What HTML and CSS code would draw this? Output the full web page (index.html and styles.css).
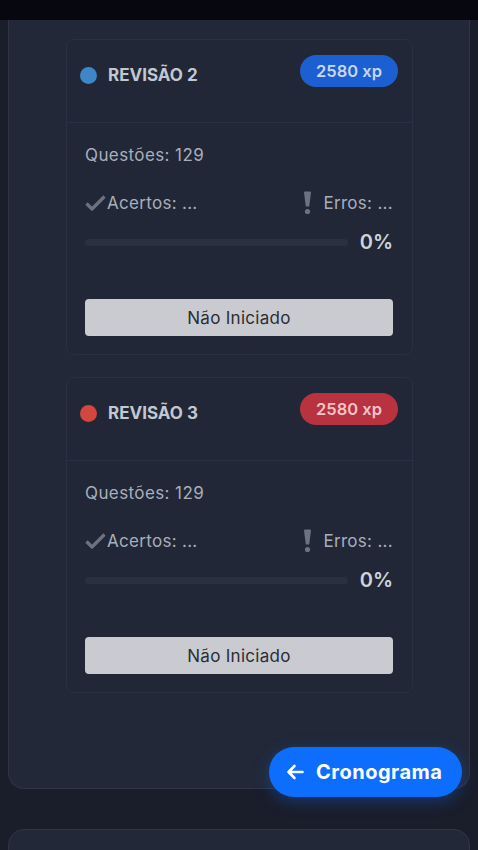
FILE: index.html
```html
<!DOCTYPE html>
<html lang="pt-BR">

<head>
    <meta charset="UTF-8">
    <meta name="viewport" content="width=device-width, initial-scale=1.0">
    <title>Revisões</title>
    <link rel="stylesheet" href="styles.css">
</head>

<body>
    <div class="topbar"></div>

    <div class="panel">
        <div class="review-card">
            <div class="review-header">
                <div class="review-title">
                    <span class="dot dot-blue"></span>
                    <span>REVISÃO 2</span>
                </div>
                <span class="xp xp-blue">2580 xp</span>
            </div>
            <div class="review-body">
                <div class="questions">Questões: 129</div>
                <div class="stats">
                    <div class="stat">
                        <svg class="icon-check" width="21" height="16" viewBox="0 0 21 16">
                            <path d="M1.5 8.5 L7 14 L19.5 1.5" fill="none" stroke="#6c7282" stroke-width="3.2" stroke-linejoin="round"/>
                        </svg>
                        <span>Acertos: ...</span>
                    </div>
                    <div class="stat">
                        <svg class="icon-alert" width="9" height="24" viewBox="0 0 9 24">
                            <path d="M1 1.5 Q1 0.5 2 0.5 H7 Q8 0.5 8 1.5 L6.2 15.5 H2.8 Z" fill="#6c7282"/>
                            <circle cx="4.5" cy="20.5" r="2.6" fill="#6c7282"/>
                        </svg>
                        <span>Erros: ...</span>
                    </div>
                </div>
                <div class="progress-row">
                    <div class="progress"><div class="progress-fill" style="width: 0%"></div></div>
                    <span class="percent">0%</span>
                </div>
                <button class="status-button">Não Iniciado</button>
            </div>
        </div>

        <div class="review-card">
            <div class="review-header">
                <div class="review-title">
                    <span class="dot dot-red"></span>
                    <span>REVISÃO 3</span>
                </div>
                <span class="xp xp-red">2580 xp</span>
            </div>
            <div class="review-body">
                <div class="questions">Questões: 129</div>
                <div class="stats">
                    <div class="stat">
                        <svg class="icon-check" width="21" height="16" viewBox="0 0 21 16">
                            <path d="M1.5 8.5 L7 14 L19.5 1.5" fill="none" stroke="#6c7282" stroke-width="3.2" stroke-linejoin="round"/>
                        </svg>
                        <span>Acertos: ...</span>
                    </div>
                    <div class="stat">
                        <svg class="icon-alert" width="9" height="24" viewBox="0 0 9 24">
                            <path d="M1 1.5 Q1 0.5 2 0.5 H7 Q8 0.5 8 1.5 L6.2 15.5 H2.8 Z" fill="#6c7282"/>
                            <circle cx="4.5" cy="20.5" r="2.6" fill="#6c7282"/>
                        </svg>
                        <span>Erros: ...</span>
                    </div>
                </div>
                <div class="progress-row">
                    <div class="progress"><div class="progress-fill" style="width: 0%"></div></div>
                    <span class="percent">0%</span>
                </div>
                <button class="status-button">Não Iniciado</button>
            </div>
        </div>
    </div>

    <div class="panel panel-next"></div>

    <button class="back-button">
        <svg width="18" height="16" viewBox="0 0 18 16">
            <path d="M16.5 8 H2.5 M8.5 2 L2.5 8 L8.5 14" fill="none" stroke="#fff" stroke-width="2.6" stroke-linecap="round" stroke-linejoin="round"/>
        </svg>
        <span>Cronograma</span>
    </button>
</body>

</html>
```

FILE: styles.css
```css
body {
    font-family: Inter, 'Noto Sans', sans-serif;
    margin: 0;
    padding: 0;
    background-color: #1a1d2a;
    color: #a9aebb;
    height: 850px;
    overflow: hidden;
    position: relative;
}

.topbar {
    height: 20px;
    background-color: #06070f;
}

.panel {
    margin: 0 8px;
    padding: 19px 56px 95px 57px;
    background-color: #222837;
    border: 1px solid #2f3546;
    border-top: none;
    border-radius: 0 0 16px 16px;
}

.panel-next {
    margin-top: 40px;
    height: 60px;
    padding: 0;
    border-top: 1px solid #2f3546;
    border-radius: 16px 16px 0 0;
}

.review-card {
    height: 316px;
    box-sizing: border-box;
    margin-bottom: 22px;
    background-color: #212736;
    border: 1px solid #293042;
    border-radius: 8px;
}

.review-card:last-child {
    margin-bottom: 0;
}

.review-header {
    height: 83px;
    box-sizing: border-box;
    padding: 15px 14px 0 13px;
    display: flex;
    justify-content: space-between;
    align-items: flex-start;
    border-bottom: 1px solid #293042;
}

.review-title {
    display: flex;
    align-items: center;
    gap: 11px;
    margin-top: 10px;
    font-size: 17px;
    font-weight: 700;
    color: #c3c7d1;
}

.dot {
    width: 17px;
    height: 17px;
    border-radius: 50%;
}

.dot-blue {
    background-color: #3d87c6;
}

.dot-red {
    background-color: #d2473f;
}

.xp {
    width: 98px;
    height: 32px;
    line-height: 32px;
    text-align: center;
    border-radius: 16px;
    font-size: 16.5px;
    font-weight: 600;
}

.xp-blue {
    background-color: #1c5fd1;
    color: #c8d6f2;
}

.xp-red {
    background-color: #b8323f;
    color: #f2c3c9;
}

.review-body {
    padding: 0 19px 0 18px;
}

.questions {
    margin-top: 20px;
    font-size: 17px;
    line-height: 24px;
    letter-spacing: 0.4px;
}

.stats {
    margin-top: 24px;
    display: flex;
    justify-content: space-between;
    align-items: center;
    font-size: 17px;
    line-height: 24px;
    letter-spacing: 0.3px;
}

.stat {
    display: flex;
    align-items: center;
    gap: 1px;
}

.icon-alert {
    margin-right: 10px;
}

.progress-row {
    margin-top: 13px;
    height: 28px;
    display: flex;
    align-items: center;
    gap: 12px;
}

.progress {
    flex: 1;
    height: 7px;
    border-radius: 4px;
    background-color: #2a3040;
    overflow: hidden;
}

.progress-fill {
    height: 100%;
    background-color: #0d6efd;
}

.percent {
    font-size: 20px;
    font-weight: 600;
    color: #d0d3da;
}

.status-button {
    display: block;
    width: 100%;
    height: 37px;
    margin-top: 43px;
    padding: 0;
    border: none;
    border-radius: 4px;
    background-color: #c9cbd0;
    color: #2a2d35;
    font-family: inherit;
    font-size: 17px;
    letter-spacing: 0.3px;
}

.back-button {
    position: absolute;
    left: 269px;
    top: 747px;
    width: 193px;
    height: 50px;
    display: flex;
    align-items: center;
    gap: 12px;
    padding: 0 0 0 17px;
    border: none;
    border-radius: 25px;
    background-color: #0d6efd;
    color: #fff;
    font-family: inherit;
    font-size: 20px;
    font-weight: 700;
    letter-spacing: 0.5px;
    box-shadow: 0 4px 16px rgba(13, 110, 253, 0.35);
}
```
